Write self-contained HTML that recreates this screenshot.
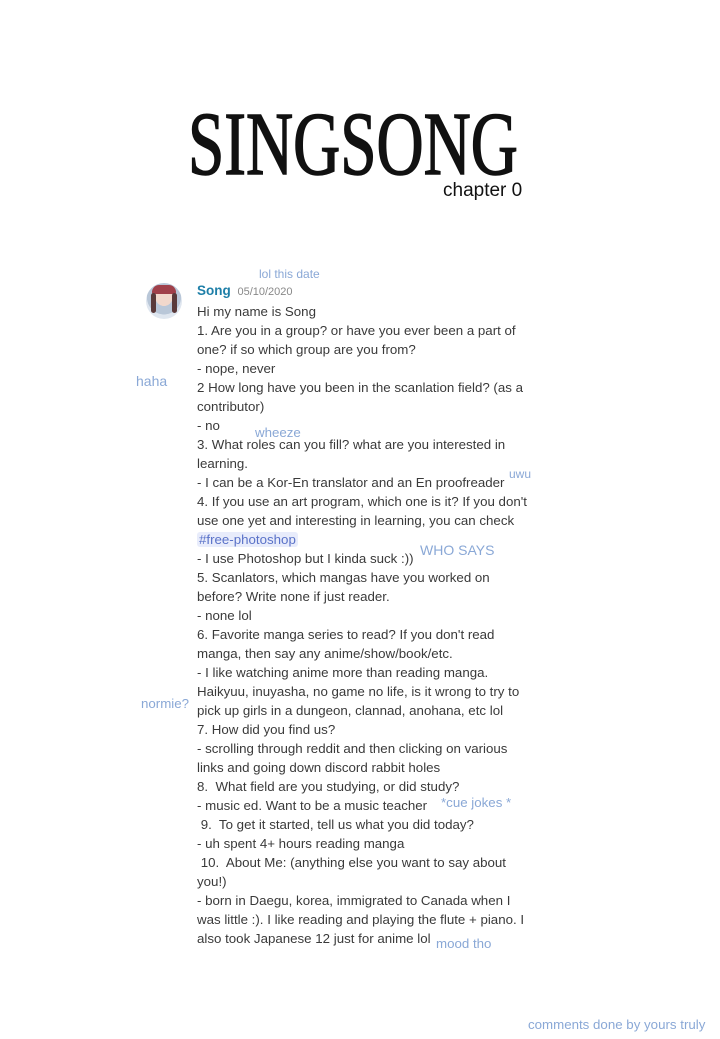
<!DOCTYPE html>
<html><head><meta charset="utf-8"><style>
body{margin:0;width:720px;height:1039px;background:#fff;position:relative;overflow:hidden;font-family:"Liberation Sans",sans-serif}
.t{position:absolute;left:197px;font-size:13.3px;color:#3a3a3a;white-space:nowrap;line-height:19px}
.c{position:absolute;color:#8aa8d6;white-space:nowrap;font-size:13.3px;line-height:14px}
</style></head><body>
<div style="position:absolute;left:188px;top:100px;font-family:'Liberation Serif',serif;font-size:90px;line-height:90px;color:#111;transform:scaleX(0.725);transform-origin:left top;white-space:nowrap;-webkit-text-stroke:1.5px #111">SINGSONG</div>
<div style="position:absolute;left:443px;top:180px;font-size:19px;color:#111">chapter 0</div>

<div style="position:absolute;left:146px;top:283px;width:36px;height:36px;border-radius:50%;background:radial-gradient(circle at 50% 40%,#f1d8cc 0 30%,#b9c7d8 31% 60%,#dfe6ef 61%);overflow:hidden"><div style="position:absolute;left:6px;top:2px;width:24px;height:9px;border-radius:12px 12px 3px 3px;background:#a0404a"></div><div style="position:absolute;left:5px;top:10px;width:5px;height:20px;background:#5a3a3a;border-radius:3px"></div><div style="position:absolute;left:26px;top:10px;width:5px;height:20px;background:#5a3a3a;border-radius:3px"></div></div>

<div class="t" style="top:281px"><b style="color:#1e7fa8;font-size:13.5px">Song</b> <span style="color:#888;font-size:11px;margin-left:3px">05/10/2020</span></div>
<div class="t" style="top:302px">Hi my name is Song</div>
<div class="t" style="top:321px">1. Are you in a group? or have you ever been a part of</div>
<div class="t" style="top:340px">one? if so which group are you from?</div>
<div class="t" style="top:359px">- nope, never</div>
<div class="t" style="top:378px">2 How long have you been in the scanlation field? (as a</div>
<div class="t" style="top:397px">contributor)</div>
<div class="t" style="top:416px">- no</div>
<div class="t" style="top:435px">3. What roles can you fill? what are you interested in</div>
<div class="t" style="top:454px">learning.</div>
<div class="t" style="top:473px">- I can be a Kor-En translator and an En proofreader</div>
<div class="t" style="top:492px">4. If you use an art program, which one is it? If you don't</div>
<div class="t" style="top:511px">use one yet and interesting in learning, you can check</div>
<div class="t" style="top:530px"><span style="background:#e8ecfb;color:#5a72c8;padding:0 2px;border-radius:3px">#free-photoshop</span></div>
<div class="t" style="top:549px">- I use Photoshop but I kinda suck :))</div>
<div class="t" style="top:568px">5. Scanlators, which mangas have you worked on</div>
<div class="t" style="top:587px">before? Write none if just reader.</div>
<div class="t" style="top:606px">- none lol</div>
<div class="t" style="top:625px">6. Favorite manga series to read? If you don't read</div>
<div class="t" style="top:644px">manga, then say any anime/show/book/etc.</div>
<div class="t" style="top:663px">- I like watching anime more than reading manga.</div>
<div class="t" style="top:682px">Haikyuu, inuyasha, no game no life, is it wrong to try to</div>
<div class="t" style="top:701px">pick up girls in a dungeon, clannad, anohana, etc lol</div>
<div class="t" style="top:720px">7. How did you find us?</div>
<div class="t" style="top:739px">- scrolling through reddit and then clicking on various</div>
<div class="t" style="top:758px">links and going down discord rabbit holes</div>
<div class="t" style="top:777px">8.&nbsp; What field are you studying, or did study?</div>
<div class="t" style="top:796px">- music ed. Want to be a music teacher</div>
<div class="t" style="top:815px">&nbsp;9.&nbsp; To get it started, tell us what you did today?</div>
<div class="t" style="top:834px">- uh spent 4+ hours reading manga</div>
<div class="t" style="top:853px">&nbsp;10.&nbsp; About Me: (anything else you want to say about</div>
<div class="t" style="top:872px">you!)</div>
<div class="t" style="top:891px">- born in Daegu, korea, immigrated to Canada when I</div>
<div class="t" style="top:910px">was little :). I like reading and playing the flute + piano. I</div>
<div class="t" style="top:929px">also took Japanese 12 just for anime lol</div>

<div class="c" style="left:259px;top:267px;font-size:12px">lol this date</div>
<div class="c" style="left:136px;top:374px;font-size:14px">haha</div>
<div class="c" style="left:255px;top:426px">wheeze</div>
<div class="c" style="left:509px;top:467px;font-size:12px">uwu</div>
<div class="c" style="left:420px;top:543px;font-size:14px">WHO SAYS</div>
<div class="c" style="left:141px;top:697px">normie?</div>
<div class="c" style="left:441px;top:796px">*cue jokes *</div>
<div class="c" style="left:436px;top:937px">mood tho</div>
<div class="c" style="left:528px;top:1018px">comments done by yours truly</div>
</body></html>
